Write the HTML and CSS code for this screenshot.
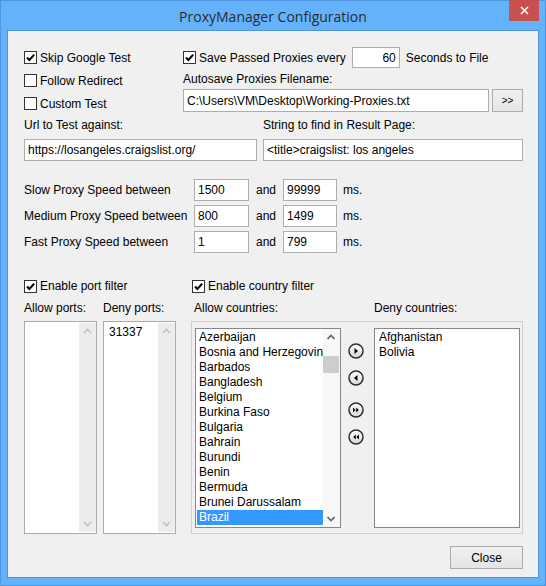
FILE: index.html
```html
<!DOCTYPE html>
<html>
<head>
<meta charset="utf-8">
<title>ProxyManager Configuration</title>
<link rel="stylesheet" href="styles.css">
</head>
<body>
<div class="window">
  <div class="titlebar">
    <div class="title">ProxyManager Configuration</div>
    <div class="close"><svg width="9" height="9" viewBox="0 0 9 9"><path d="M1 1L8 8M8 1L1 8" stroke="#fff" stroke-width="1.6" fill="none"/></svg></div>
  </div>
  <div class="client">
    <div class="top">
      <div class="left-checks">
        <div class="cb-row"><span class="cb"><svg viewBox="0 0 11 11" width="11" height="11"><path d="M2 5.5L4.4 8L9.2 2.6" stroke="#000" stroke-width="2" fill="none"/></svg></span>Skip Google Test</div>
        <div class="cb-row"><span class="cb"></span>Follow Redirect</div>
        <div class="cb-row"><span class="cb"></span>Custom Test</div>
      </div>
      <div class="right-top">
        <div class="save-row"><span class="cb"><svg viewBox="0 0 11 11" width="11" height="11"><path d="M2 5.5L4.4 8L9.2 2.6" stroke="#000" stroke-width="2" fill="none"/></svg></span><span class="save-text">Save Passed Proxies every</span><div class="field num">60</div><span class="sec-text">Seconds to File</span></div>
        <div class="label-row">Autosave Proxies Filename:</div>
        <div class="file-row"><div class="field file">C:\Users\VM\Desktop\Working-Proxies.txt</div><div class="btn small">&gt;&gt;</div></div>
      </div>
    </div>
    <div class="url-grid">
      <div class="lbl">Url to Test against:</div>
      <div class="lbl">String to find in Result Page:</div>
      <div class="field">https://losangeles.craigslist.org/</div>
      <div class="field">&lt;title&gt;craigslist: los angeles</div>
    </div>
    <div class="speed">
      <div class="lbl">Slow Proxy Speed between</div><div class="field">1500</div><div class="and">and</div><div class="field">99999</div><div class="ms">ms.</div>
      <div class="lbl">Medium Proxy Speed between</div><div class="field">800</div><div class="and">and</div><div class="field">1499</div><div class="ms">ms.</div>
      <div class="lbl">Fast Proxy Speed between</div><div class="field">1</div><div class="and">and</div><div class="field">799</div><div class="ms">ms.</div>
    </div>
    <div class="filters">
      <div class="ports">
        <div class="filter-head"><span class="cb"><svg viewBox="0 0 11 11" width="11" height="11"><path d="M2 5.5L4.4 8L9.2 2.6" stroke="#000" stroke-width="2" fill="none"/></svg></span>Enable port filter</div>
        <div class="labels-row"><span class="port-lbl">Allow ports:</span><span>Deny ports:</span></div>
        <div class="port-lists">
          <div class="plist">
            <div class="pitems"></div>
            <div class="pscroll"><svg width="17" height="17" viewBox="0 0 17 17"><path d="M5 10L8.5 6.5L12 10" stroke="#c2c2c2" stroke-width="1.6" fill="none"/></svg><div class="ptrack"></div><svg width="17" height="17" viewBox="0 0 17 17"><path d="M5 7L8.5 10.5L12 7" stroke="#c2c2c2" stroke-width="1.6" fill="none"/></svg></div>
          </div>
          <div class="plist">
            <div class="pitems"><div class="pitem">31337</div></div>
            <div class="pscroll"><svg width="17" height="17" viewBox="0 0 17 17"><path d="M5 10L8.5 6.5L12 10" stroke="#c2c2c2" stroke-width="1.6" fill="none"/></svg><div class="ptrack"></div><svg width="17" height="17" viewBox="0 0 17 17"><path d="M5 7L8.5 10.5L12 7" stroke="#c2c2c2" stroke-width="1.6" fill="none"/></svg></div>
          </div>
        </div>
      </div>
      <div class="countries">
        <div class="filter-head country-head"><span class="cb"><svg viewBox="0 0 11 11" width="11" height="11"><path d="M2 5.5L4.4 8L9.2 2.6" stroke="#000" stroke-width="2" fill="none"/></svg></span>Enable country filter</div>
        <div class="labels-row country-labels"><span class="allow-lbl">Allow countries:</span><span>Deny countries:</span></div>
        <div class="panel">
          <div class="clist">
            <div class="citems">
              <div class="citem">Azerbaijan</div>
              <div class="citem">Bosnia and Herzegovina</div>
              <div class="citem">Barbados</div>
              <div class="citem">Bangladesh</div>
              <div class="citem">Belgium</div>
              <div class="citem">Burkina Faso</div>
              <div class="citem">Bulgaria</div>
              <div class="citem">Bahrain</div>
              <div class="citem">Burundi</div>
              <div class="citem">Benin</div>
              <div class="citem">Bermuda</div>
              <div class="citem">Brunei Darussalam</div>
              <div class="citem sel">Brazil</div>
            </div>
            <div class="cscroll">
              <svg width="16" height="17" viewBox="0 0 16 17"><path d="M4.5 10L8 6.5L11.5 10" stroke="#606060" stroke-width="1.6" fill="none"/></svg>
              <div class="ctrack"><div class="thumb"></div></div>
              <svg width="16" height="17" viewBox="0 0 16 17"><path d="M4.5 7L8 10.5L11.5 7" stroke="#606060" stroke-width="1.6" fill="none"/></svg>
            </div>
          </div>
          <div class="arrows">
            <svg class="arr a1" width="16" height="16" viewBox="0 0 16 16"><defs><linearGradient id="g" x1="0" y1="0" x2="0" y2="1"><stop offset="0" stop-color="#ffffff"/><stop offset="1" stop-color="#d6d6d6"/></linearGradient></defs><circle cx="8" cy="8" r="7" fill="url(#g)" stroke="#2f2f2f" stroke-width="1.5"/><path d="M6.5 5L10 8L6.5 11Z" fill="#000"/></svg>
            <svg class="arr a2" width="16" height="16" viewBox="0 0 16 16"><circle cx="8" cy="8" r="7" fill="url(#g)" stroke="#2f2f2f" stroke-width="1.5"/><path d="M9.5 5L6 8L9.5 11Z" fill="#000"/></svg>
            <svg class="arr a3" width="16" height="16" viewBox="0 0 16 16"><circle cx="8" cy="8" r="7" fill="url(#g)" stroke="#2f2f2f" stroke-width="1.5"/><path d="M5 5.5L7.6 8L5 10.5Z M8.2 5.5L10.8 8L8.2 10.5Z" fill="#000"/></svg>
            <svg class="arr a4" width="16" height="16" viewBox="0 0 16 16"><circle cx="8" cy="8" r="7" fill="url(#g)" stroke="#2f2f2f" stroke-width="1.5"/><path d="M7.8 5.5L5.2 8L7.8 10.5Z M11 5.5L8.4 8L11 10.5Z" fill="#000"/></svg>
          </div>
          <div class="clist deny">
            <div class="citems">
              <div class="citem">Afghanistan</div>
              <div class="citem">Bolivia</div>
            </div>
          </div>
        </div>
      </div>
    </div>
    <div class="footer"><div class="btn close-btn">Close</div></div>
  </div>
</div>
</body>
</html>
```

FILE: styles.css
```css
* { box-sizing: border-box; }
html, body { margin: 0; padding: 0; }
body {
  width: 546px;
  height: 586px;
  overflow: hidden;
  font-family: "Liberation Sans", Arial, sans-serif;
  font-size: 12px;
  color: #000;
  background: #63b1fb;
}
.window {
  width: 546px;
  height: 586px;
  background: #64b2fc;
  border: 1px solid #4f96de;
  display: flex;
  flex-direction: column;
}
.titlebar {
  height: 29px;
  flex: none;
  display: grid;
  grid-template-columns: 1fr auto 1fr;
  align-items: center;
}
.title {
  grid-column: 2;
  font-family: "Open Sans", "Noto Sans", sans-serif;
  font-size: 14px;
  color: #2b2b2b;
  padding-top: 1px;
}
.close {
  grid-column: 3;
  justify-self: end;
  align-self: start;
  width: 30px;
  height: 21px;
  margin-top: -1px;
  margin-right: 6px;
  background: #c75050;
  display: flex;
  align-items: center;
  justify-content: center;
}
.client {
  margin: 0 6px;
  height: 548px;
  flex: none;
  border: 1px solid #4f96de;
  background: #f0f0f0;
  padding: 15px 15px 0 16px;
}
.cb {
  width: 13px;
  height: 13px;
  border: 1px solid #333;
  background: #fff;
  display: inline-flex;
  align-items: center;
  justify-content: center;
  flex: none;
}
.top { display: flex; }
.left-checks { width: 159px; flex: none; }
.cb-row {
  height: 23px;
  display: flex;
  align-items: center;
  gap: 3px;
}
.right-top { flex: 1; display: flex; flex-direction: column; }
.save-row {
  height: 23px;
  display: flex;
  align-items: center;
}
.save-text { margin-left: 3px; }
.field {
  background: #fff;
  border: 1px solid #adadad;
  padding: 0 3px;
  display: flex;
  align-items: center;
  white-space: nowrap;
  overflow: hidden;
}
.num {
  width: 48px;
  height: 21px;
  margin-left: 6px;
  justify-content: flex-end;
}
.sec-text { margin-left: 6px; }
.label-row { height: 20px; line-height: 20px; }
.file-row { height: 23px; display: flex; gap: 3px; }
.file { width: 306px; }
.btn {
  border: 1px solid #acacac;
  background: linear-gradient(#f0f0f0, #e5e5e5);
  display: flex;
  align-items: center;
  justify-content: center;
}
.small { width: 31px; font-size: 10px; }
.url-grid {
  display: grid;
  grid-template-columns: 233px 260px;
  grid-template-rows: 20px 22px;
  column-gap: 6px;
  row-gap: 4px;
}
.lbl { display: flex; align-items: center; white-space: nowrap; }
.speed {
  margin-top: 18px;
  display: grid;
  grid-template-columns: 170px 55px 34px 54px auto;
  grid-auto-rows: 22px;
  row-gap: 4px;
}
.and, .ms { display: flex; align-items: center; }
.and { padding-left: 7px; }
.ms { padding-left: 6px; }
.filters {
  margin-top: 23px;
  display: flex;
  gap: 15px;
}
.ports { width: 152px; flex: none; }
.filter-head {
  height: 20px;
  display: flex;
  align-items: center;
  gap: 3px;
}
.labels-row {
  margin-top: 2px;
  height: 20px;
  line-height: 20px;
  display: flex;
}
.port-lbl { width: 79px; }
.port-lists { margin-top: 3px; display: flex; gap: 6px; }
.plist {
  width: 73px;
  height: 213px;
  border: 1px solid #acacac;
  background: #fff;
  display: flex;
}
.pitems { flex: 1; padding: 3px 0 0 5px; }
.pitem { height: 15px; line-height: 15px; }
.pscroll {
  width: 17px;
  margin: 1px 0;
  background: #ececec;
  display: flex;
  flex-direction: column;
}
.ptrack { flex: 1; }
.countries { width: 332px; flex: none; }
.country-head { padding-left: 1px; }
.country-labels { padding-left: 3px; }
.allow-lbl { width: 180px; }
.panel {
  margin-top: 3px;
  height: 213px;
  border: 1px solid #cfcfcf;
  padding: 6px 2px 5px 3px;
  display: flex;
}
.clist {
  width: 146px;
  height: 200px;
  border: 1px solid #828790;
  background: #fff;
  display: flex;
  overflow: hidden;
}
.citems { flex: 1; min-width: 0; padding-top: 1px; overflow: hidden; }
.citem {
  height: 15px;
  line-height: 15px;
  margin-left: 1px;
  padding-left: 2px;
  white-space: nowrap;
  overflow: hidden;
}
.citem.sel { background: #3399ff; color: #fff; }
.cscroll {
  width: 17px;
  flex: none;
  background: #f7f7f7;
  display: flex;
  flex-direction: column;
}
.ctrack { flex: 1; }
.thumb {
  margin-top: 10px;
  width: 16px;
  height: 17px;
  background: #cdcdcd;
}
.arrows {
  width: 33px;
  flex: none;
  display: flex;
  flex-direction: column;
  padding-left: 7px;
  padding-top: 15px;
}
.arr { display: block; }
.a2 { margin-top: 11px; }
.a3 { margin-top: 16px; }
.a4 { margin-top: 11px; }
.deny .citems { padding-left: 1px; }
.footer {
  margin-top: 12px;
  display: flex;
  justify-content: flex-end;
}
.close-btn { width: 73px; height: 23px; }
```
